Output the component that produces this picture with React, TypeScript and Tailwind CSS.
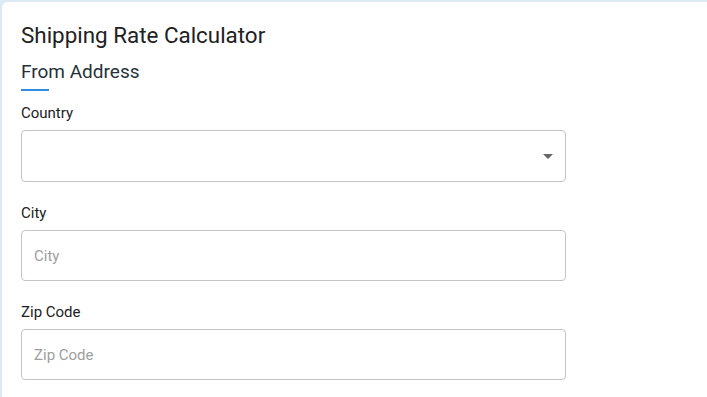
import React from "react";

function Field({ label, placeholder }: { label: string; placeholder: string }) {
  return (
    <div className="mt-[21px]">
      <label className="block text-[15px] leading-[20px] text-[#212121]">{label}</label>
      <input
        placeholder={placeholder}
        className="mt-[7px] block w-[545px] h-[51px] rounded-[4px] border border-[#c4c4c4] px-[12px] text-[15px] text-[#212121] placeholder:text-[#9e9e9e] outline-none"
      />
    </div>
  );
}

export default function App() {
  return (
    <div className="min-h-[397px] bg-[#dcebf3] pl-[2px] pt-[2px] overflow-hidden" style={{ fontFamily: "Roboto, 'Liberation Sans', sans-serif" }}>
      <div className="min-h-[395px] bg-white rounded-tl-[6px] pl-[19px] pt-[19px]">
        <h1 className="text-[22.4px] leading-[28px] text-[#212121]">Shipping Rate Calculator</h1>
        <h2 className="mt-[11px] text-[19px] leading-[24px] text-[#263238]">From Address</h2>
        <div className="mt-[5px] w-[28px] h-[2px] bg-[#2f8ce0]" />
        <div className="mt-[12px]">
          <label className="block text-[15px] leading-[20px] text-[#212121]">Country</label>
          <div className="mt-[7px] relative w-[545px] h-[52px] rounded-[4px] border border-[#c4c4c4]">
            <div className="absolute right-[12px] top-[23px] w-0 h-0 border-l-[5px] border-r-[5px] border-t-[5px] border-l-transparent border-r-transparent border-t-[#666]" />
          </div>
        </div>
        <Field label="City" placeholder="City" />
        <Field label="Zip Code" placeholder="Zip Code" />
      </div>
    </div>
  );
}
